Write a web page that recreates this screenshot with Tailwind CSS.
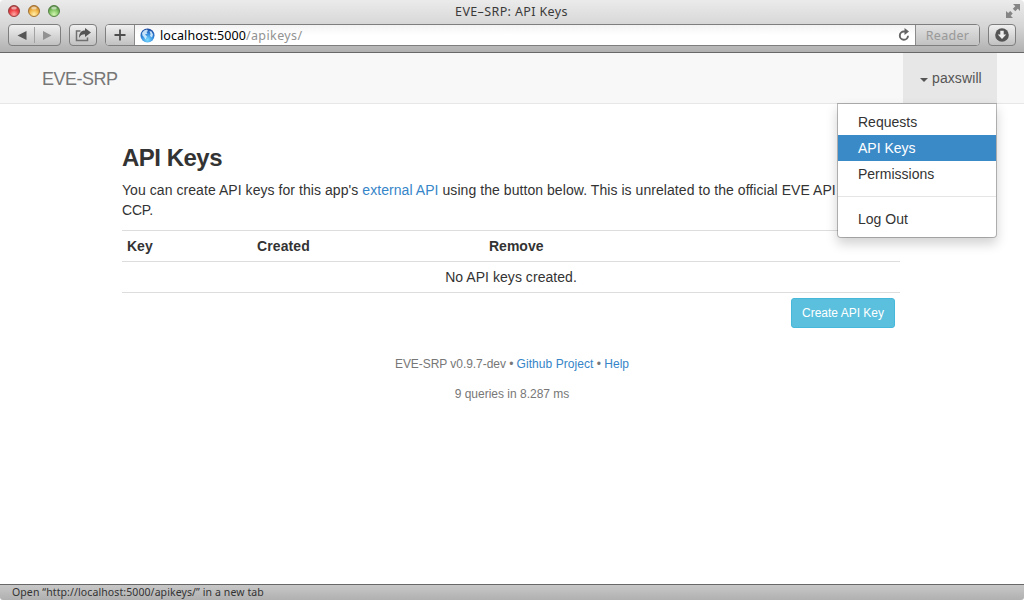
<!DOCTYPE html>
<html lang="en">
<head>
<meta charset="utf-8">
<title>EVE-SRP: API Keys</title>
<script src="https://cdn.jsdelivr.net/npm/@tailwindcss/browser@4"></script>
</head>
<body class="bg-white">
<div class="flex h-[600px] w-[1024px] flex-col overflow-hidden bg-white font-['Liberation_Sans',Arial,sans-serif] text-sm leading-5 text-[#333]">
  <header class="h-[53px] shrink-0 rounded-t-[4px] border-b border-[#686868] bg-linear-to-b from-[#ebebeb] via-[#d6d6d6] to-[#b1b1b1] font-['Noto_Sans',sans-serif]">
    <div class="relative flex h-6 items-center justify-center">
      <svg class="absolute left-2 top-[4px]" width="54" height="14" viewBox="0 0 54 14">
        <defs>
          <radialGradient id="r" cx=".5" cy=".8" r=".8"><stop offset="0" stop-color="#ffaaa5"/><stop offset=".5" stop-color="#ee4448"/><stop offset="1" stop-color="#b02e30"/></radialGradient>
          <radialGradient id="y" cx=".5" cy=".8" r=".8"><stop offset="0" stop-color="#ffefab"/><stop offset=".5" stop-color="#f3b84b"/><stop offset="1" stop-color="#b67420"/></radialGradient>
          <radialGradient id="g" cx=".5" cy=".8" r=".8"><stop offset="0" stop-color="#d3f5b1"/><stop offset=".5" stop-color="#86c867"/><stop offset="1" stop-color="#467c36"/></radialGradient>
        </defs>
        <circle cx="6" cy="7" r="5.5" fill="url(#r)" stroke="#8e3a3a" stroke-width=".9"/>
        <circle cx="26" cy="7" r="5.5" fill="url(#y)" stroke="#98692d" stroke-width=".9"/>
        <circle cx="46" cy="7" r="5.5" fill="url(#g)" stroke="#4d7a3d" stroke-width=".9"/>
        <g fill="#fff" fill-opacity=".55"><ellipse cx="6" cy="4.100" rx="2.8" ry="1.5"/><ellipse cx="26" cy="4.100" rx="2.8" ry="1.5"/><ellipse cx="46" cy="4.100" rx="2.8" ry="1.5"/></g>
      </svg>
      <span class="whitespace-nowrap pr-[1px] text-[12.5px] tracking-[0.38px] text-[#3a3a3a]">EVE–SRP: API Keys</span>
      <svg class="absolute right-[3px] top-[3px]" width="16" height="16" viewBox="0 0 16 16" fill="#858585">
        <path d="M8 1h7v7l-2.2-2.2-2.5 2.5-2.5-2.5 2.5-2.5z"/><path d="M1 8l2.2 2 2-2 2.5 2.500-2 2.200L8 15H1z"/>
      </svg>
    </div>
    <div class="flex h-[22px] items-stretch pl-2 pr-[8px]">
      <div class="flex w-[53px] items-center rounded-[4px] border border-[#7e7e7e] bg-linear-to-b from-[#f0f0f0] to-[#c1c1c1]">
        <svg width="51" height="20" viewBox="0 0 51 20"><path d="M8.500 10.500L17.500 6v9z" fill="#555"/><path d="M25.500 2v16" stroke="#a2a2a2"/><path d="M42.500 10.500L34 6v9z" fill="#929292"/></svg>
      </div>
      <div class="ml-2 flex w-7 items-center justify-center rounded-[4px] border border-[#7e7e7e] bg-linear-to-b from-[#f0f0f0] to-[#c1c1c1]">
        <svg width="18" height="16" viewBox="0 0 18 16"><path d="M6.500 4H2.500v9.500h11V10.500" fill="none" stroke="#707070" stroke-width="1.500"/><path d="M5 11c0-5 2-7.500 6-7.500V1l6 4.500-6 4.500V7.200c-3 0-4.500 1-6 3.800z" fill="#555"/></svg>
      </div>
      <div class="ml-2 flex w-[875px] overflow-hidden rounded-[4px] border border-[#7e7e7e] bg-white">
        <div class="flex w-[29px] items-center justify-center border-r border-[#8b8b8b] bg-linear-to-b from-[#f0f0f0] to-[#c1c1c1]">
          <svg width="12" height="12" viewBox="0 0 12 12"><path d="M6 .5v11M.5 6h11" stroke="#4d4d4d" stroke-width="1.800"/></svg>
        </div>
        <div class="flex flex-1 items-center bg-linear-to-b from-[#f3f3f3] via-white to-white pl-[5px] pr-[5px]">
          <svg width="15" height="15" viewBox="0 0 15 15"><defs><radialGradient id="b" cx=".5" cy=".8" r=".8"><stop offset="0" stop-color="#7cdcff"/><stop offset=".55" stop-color="#3187dc"/><stop offset="1" stop-color="#1b459b"/></radialGradient></defs><circle cx="7.500" cy="7.500" r="7" fill="url(#b)"/><path d="M2 5l2-2.500 3-1 1 1.500-1.500 1L7.500 5.500 5 6.500l2 2-1.500 3L4 9 2.500 7.500zM9.500 3l2 .5 1.500 3-1 3-2-1.500.5-2z" fill="#dff3ff" opacity=".85"/></svg>
          <span class="ml-[5px] flex-1 whitespace-nowrap pt-[2px] text-[12.5px] leading-5 tracking-[0.08px] text-black">localhost:5000<span class="tracking-[0.4px] text-[#929292]">/apikeys/</span></span>
          <svg class="-mt-px" width="12" height="13" viewBox="0 0 12 13"><path d="M8 3.500H6A4.100 4.100 0 1 0 10 7.700" fill="none" stroke="#646464" stroke-width="1.900"/><path d="M6.500 0L11 3.500 6.500 7z" fill="#646464"/></svg>
        </div>
        <div class="flex w-[64px] items-center justify-center border-l border-[#8b8b8b] bg-linear-to-b from-[#e2e2e2] to-[#c2c2c2] pt-[2px] text-[12.5px] tracking-[0.3px] text-[#999]">Reader</div>
      </div>
      <div class="ml-2 flex w-7 items-center justify-center rounded-[4px] border border-[#7e7e7e] bg-linear-to-b from-[#f0f0f0] to-[#c1c1c1]">
        <svg width="14" height="14" viewBox="0 0 14 14"><circle cx="7" cy="7" r="6.800" fill="#555"/><path d="M5.300 2.700h3.400V6.500h2.500L7 11 2.800 6.500h2.500z" fill="#eee"/></svg>
      </div>
    </div>
  </header>

  <nav class="flex h-[51px] shrink-0 items-stretch justify-between border-b border-[#e7e7e7] bg-[#f8f8f8] pl-[42px] pr-[27px] text-[#777]">
    <span class="flex items-center pt-[2px] text-lg tracking-[-0.5px]">EVE-SRP</span>
    <div class="relative flex w-[94px] items-center bg-[#e7e7e7] pl-[17px] text-[#555]">
      <svg class="mt-[3px]" width="8" height="4" viewBox="0 0 8 4"><path d="M0 0h8L4 4z" fill="#555"/></svg>
      <span class="ml-[4px] tracking-[0.1px]">paxswill</span>
      <ul class="absolute right-0 top-[50px] z-10 w-[160px] rounded-b-[4px] border border-black/25 bg-white bg-clip-padding pb-[5px] pt-[5px] text-[#333] shadow-[0_6px_12px_rgba(0,0,0,0.175)]">
        <li class="h-[26px] px-5 py-[3px]">Requests</li>
        <li class="h-[26px] bg-[#3b8ac8] px-5 py-[3px] text-white">API Keys</li>
        <li class="h-[26px] px-5 py-[3px]">Permissions</li>
        <li class="my-[9px] h-px bg-[#e5e5e5]"></li>
        <li class="h-[26px] px-5 py-[3px]">Log Out</li>
      </ul>
    </div>
  </nav>

  <main class="min-h-0 flex-1 pl-[122px] pr-[124px] pt-10">
    <h3 class="text-2xl font-bold leading-[27px] tracking-[-0.5px]">API Keys</h3>
    <p class="mt-[9px] whitespace-nowrap tracking-[0.06px]">You can create API keys for this app's <a class="text-[#3585c8]">external API</a> using the button below. This is unrelated to the official EVE API<br><span class="tracking-[-0.2px]">CCP.</span></p>
    <div class="mt-[10px] grid h-[31px] grid-cols-[130px_232px_1fr] items-center border-t border-[#ddd] font-bold">
      <span class="pl-[5px]">Key</span><span class="pl-[5px] tracking-[0.1px]">Created</span><span class="pl-[5px]">Remove</span>
    </div>
    <div class="flex h-8 items-center justify-center border-y border-[#ddd] tracking-[0.05px]">No API keys created.</div>
    <div class="mt-[5px] flex justify-end pr-[5px]">
      <button class="h-[30px] w-[104px] whitespace-nowrap rounded-[3px] border border-[#46b8da] bg-[#5bc0de] text-xs text-white">Create API Key</button>
    </div>
    <footer class="mt-[26px] flex flex-col items-center gap-[10px] pl-[2px] text-xs leading-5 text-[#777]">
      <p><span class="tracking-[-0.05px]">EVE-SRP v0.9.7-dev • </span><a class="tracking-[0.06px] text-[#3585c8]">Github Project</a> • <a class="text-[#3585c8]">Help</a></p>
      <p>9 queries in 8.287 ms</p>
    </footer>
  </main>

  <div class="flex h-4 shrink-0 items-center rounded-b-[3px] border-t border-[#686868] bg-linear-to-b from-[#c8c8c8] to-[#b0b0b0] pl-3 font-['Noto_Sans',sans-serif] text-[10.5px] leading-[14px] tracking-[0.1px] text-[#333]"><span class="-mt-[2px]">Open “http://localhost:5000/apikeys/” in a new tab</span></div>
</div>
</body>
</html>
